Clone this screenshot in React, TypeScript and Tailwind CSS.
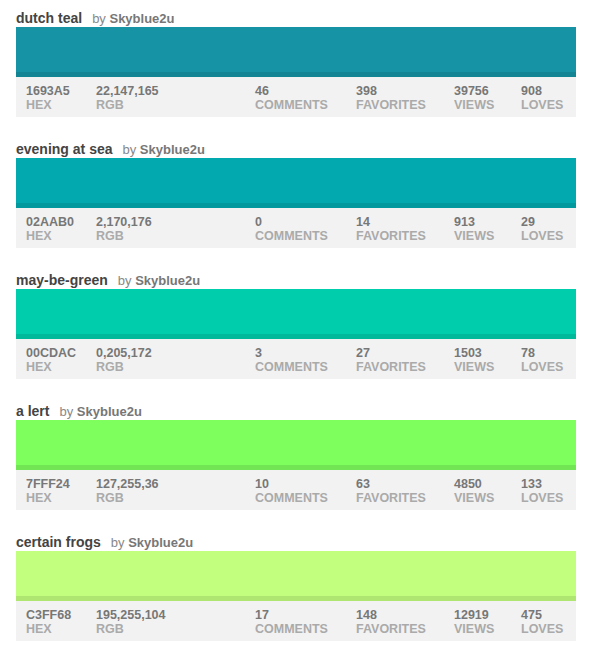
type Palette = {
  title: string;
  hex: string;
  swatch: string;
  rgb: string;
  comments: number;
  favorites: number;
  views: number;
  loves: number;
};

// swatch = colour as it shows on screen in the reference
const palettes: Palette[] = [
  { title: "dutch teal", hex: "1693A5", swatch: "#1693a5", rgb: "22,147,165", comments: 46, favorites: 398, views: 39756, loves: 908 },
  { title: "evening at sea", hex: "02AAB0", swatch: "#02aab0", rgb: "2,170,176", comments: 0, favorites: 14, views: 913, loves: 29 },
  { title: "may-be-green", hex: "00CDAC", swatch: "#00cdac", rgb: "0,205,172", comments: 3, favorites: 27, views: 1503, loves: 78 },
  { title: "a lert", hex: "7FFF24", swatch: "#7eff5d", rgb: "127,255,36", comments: 10, favorites: 63, views: 4850, loves: 133 },
  { title: "certain frogs", hex: "C3FF68", swatch: "#c3ff7e", rgb: "195,255,104", comments: 17, favorites: 148, views: 12919, loves: 475 },
];

function Stat({ value, label, width }: { value: string | number; label: string; width: string }) {
  return (
    <div className={`${width} flex-none leading-[14px] font-bold text-[12.5px]`}>
      <div className="text-[#777]">{value}</div>
      <div className="text-[#aaa] uppercase">{label}</div>
    </div>
  );
}

function PaletteCard({ p }: { p: Palette }) {
  return (
    <div className="mb-[14px]">
      {/* Title line */}
      <div className="pt-[10px] pb-[1px] h-[27px] flex items-baseline leading-[16px]">
        <span className="text-[14px] font-bold text-[#444]">{p.title}</span>
        <span className="ml-[10px] text-[13px] text-[#888]">
          by <span className="font-bold text-[#777]">Skyblue2u</span>
        </span>
      </div>

      {/* Colour swatch with darker bottom edge */}
      <div className="h-[50px] border-b-[5px] border-black/10" style={{ backgroundColor: p.swatch }} />

      {/* Stats strip */}
      <div className="h-[40px] bg-[#f2f2f2] flex pl-[10px] pt-[7px] pb-[5px]">
        <Stat value={p.hex} label="Hex" width="w-[70px]" />
        <Stat value={p.rgb} label="RGB" width="w-[159px]" />
        <Stat value={p.comments} label="Comments" width="w-[101px]" />
        <Stat value={p.favorites} label="Favorites" width="w-[98px]" />
        <Stat value={p.views} label="Views" width="w-[67px]" />
        <Stat value={p.loves} label="Loves" width="w-[55px]" />
      </div>
    </div>
  );
}

export default function App() {
  return (
    <div className="w-[594px] h-[649px] overflow-hidden bg-white pl-[16px] pr-[18px]" style={{ fontFamily: '"Liberation Sans", Arial, sans-serif' }}>
      {palettes.map((p) => (
        <PaletteCard key={p.hex} p={p} />
      ))}
    </div>
  );
}
